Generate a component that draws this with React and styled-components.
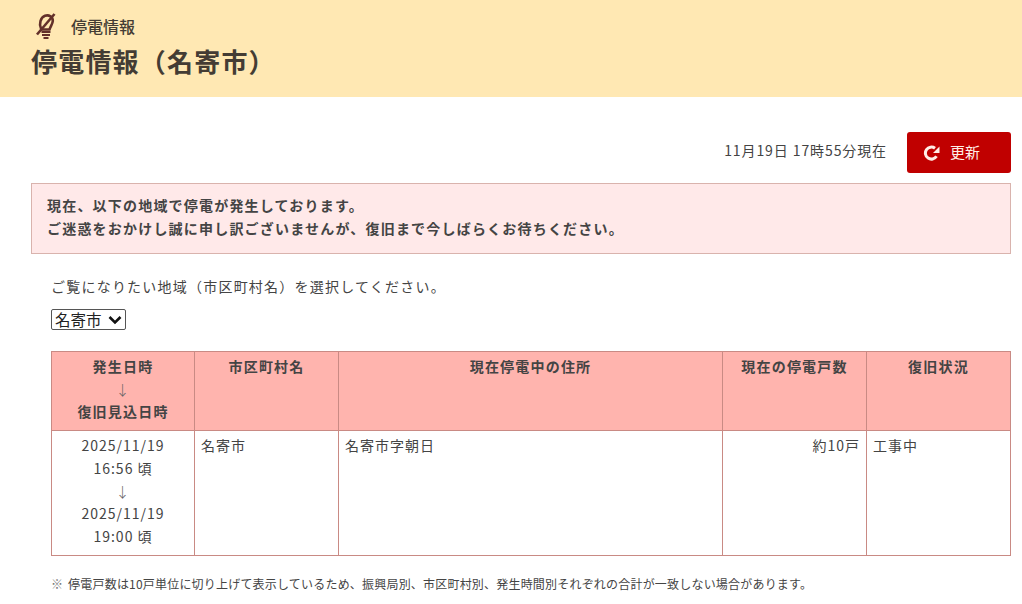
import React from "react";
import styled, { createGlobalStyle } from "styled-components";

const chevron =
  "data:image/svg+xml,%3Csvg xmlns='http://www.w3.org/2000/svg' width='14' height='10' viewBox='0 0 14 10'%3E%3Cpath d='M1.5 2l5.5 5.5L12.500 2' fill='none' stroke='%23111' stroke-width='2.6'/%3E%3C/svg%3E";

const Global = createGlobalStyle`
  html, body { margin: 0; padding: 0; background: #fff; }
  body {
    color: #444;
    font-family: "Noto Sans CJK JP", "Noto Sans", sans-serif;
    font-size: 14px;
    letter-spacing: 1.2px;
  }
`;

const Header = styled.header`
  height: 97px;
  box-sizing: border-box;
  background: #ffe8b3;
  padding: 13px 0 0 31px;
`;
const Crumb = styled.div`
  display: flex;
  align-items: center;
  gap: 15px;
  height: 28px;
  padding-left: 5px;
  font-size: 16px;
  line-height: 28px;
  letter-spacing: 0;
  font-weight: 500;
  color: #443c34;
`;
const CrumbLabel = styled.span`
  position: relative;
  top: -1px;
`;
const Title = styled.h1`
  margin: 2px 0 0;
  font-size: 26px;
  line-height: 36px;
  font-weight: 700;
  letter-spacing: 1.2px;
  color: #443c34;
`;
const Main = styled.main`
  padding: 35px 11px 0 31px;
`;
const StatusRow = styled.div`
  display: flex;
  justify-content: flex-end;
  align-items: center;
  gap: 20px;
  height: 41px;
`;
const Stamp = styled.span`
  letter-spacing: 0.9px;
  line-height: 37px;
  align-self: flex-start;
  color: #444;
`;
const RefreshButton = styled.button`
  display: flex;
  align-items: center;
  gap: 10px;
  width: 104px;
  height: 41px;
  padding: 0 0 3px 16px;
  border: 0;
  border-radius: 3px;
  background: #c00000;
  color: #ffeee6;
  font: inherit;
  font-size: 15px;
  letter-spacing: 0;
`;
const RefreshGlyph = styled.svg`
  margin-top: 4px;
`;
const Notice = styled.div`
  margin-top: 10px;
  height: 71px;
  box-sizing: border-box;
  padding: 10px 15px 0;
  border: 1px solid #d9b3ad;
  background: #ffe9e9;
  font-weight: 700;
  line-height: 23px;
  letter-spacing: 1.2px;
  color: #444;
`;
const Section = styled.div`
  padding-left: 20px;
`;
const Lead = styled.p`
  margin: 20px 0 0;
  line-height: 24px;
  letter-spacing: 1.22px;
`;
const AreaSelect = styled.select`
  display: block;
  margin-top: 11px;
  width: 75px;
  height: 21px;
  padding: 0 0 0 3px;
  appearance: none;
  font-family: inherit;
  font-size: 15.500px;
  line-height: 19px;
  letter-spacing: 0;
  color: #222;
  background: #fff url("${chevron}") no-repeat right 3px center;
  border: 1px solid #555;
  border-radius: 2px;
`;
const Table = styled.table`
  margin-top: 21px;
  width: 959px;
  border-collapse: collapse;
  table-layout: fixed;
`;
const Th = styled.th`
  width: ${(p) => p.$w}px;
  height: 79px;
  box-sizing: border-box;
  padding: 3px 6px;
  vertical-align: top;
  background: #ffb4ae;
  border: 1px solid #c98a84;
  font-weight: 700;
  line-height: 22.5px;
  color: #444;
`;
const Td = styled.td`
  height: 125px;
  box-sizing: border-box;
  padding: 3px 6px;
  vertical-align: top;
  border: 1px solid #c98a84;
  line-height: 22.8px;
  letter-spacing: 1px;
  text-align: ${(p) => p.$align || "left"};
`;
const Arrow = styled.span`
  font-weight: 300;
  color: #666;
`;
const Note = styled.p`
  margin: 19px 0 0;
  font-size: 12px;
  line-height: 18px;
  letter-spacing: 0.2px;
`;
const NoteMark = styled.span`
  margin-right: 2px;
  color: #777;
`;

const BulbIcon = () => (
  <svg width="20" height="28" viewBox="0 0 20 28" fill="none" stroke="#63302a">
    <path d="M5 15.500C2.800 11 4.500 4.500 9 2.800c4-1.300 8 1 7.800 5.200-.2 3-2.300 5.500-3.300 8.500H6z" strokeWidth="2.600" />
    <path d="M5.500 19h9M6 22h8M7.500 25h5" strokeWidth="2.200" />
    <path d="M1 21.500L18.500 1" strokeWidth="2.600" />
  </svg>
);
const RefreshIcon = () => (
  <RefreshGlyph width="17" height="16" viewBox="0 0 17 16" fill="none">
    <path d="M13.500 11.300A6 6 0 1 1 12 3.300" stroke="#ffeee6" strokeWidth="3" />
    <path d="M16.500 1.500v6.500H10z" fill="#ffeee6" />
  </RefreshGlyph>
);

export default function App() {
  return (
    <>
      <Global />
      <Header>
        <Crumb>
          <BulbIcon />
          <CrumbLabel>停電情報</CrumbLabel>
        </Crumb>
        <Title>停電情報（名寄市）</Title>
      </Header>
      <Main>
        <StatusRow>
          <Stamp>11月19日 17時55分現在</Stamp>
          <RefreshButton>
            <RefreshIcon />
            更新
          </RefreshButton>
        </StatusRow>
        <Notice>
          現在、以下の地域で停電が発生しております。
          <br />
          ご迷惑をおかけし誠に申し訳ございませんが、復旧まで今しばらくお待ちください。
        </Notice>
        <Section>
          <Lead>ご覧になりたい地域（市区町村名）を選択してください。</Lead>
          <AreaSelect defaultValue="名寄市">
            <option>名寄市</option>
          </AreaSelect>
          <Table>
            <thead>
              <tr>
                <Th $w={143}>
                  発生日時
                  <br />
                  <Arrow>↓</Arrow>
                  <br />
                  復旧見込日時
                </Th>
                <Th $w={144}>市区町村名</Th>
                <Th $w={384}>現在停電中の住所</Th>
                <Th $w={144}>現在の停電戸数</Th>
                <Th $w={144}>復旧状況</Th>
              </tr>
            </thead>
            <tbody>
              <tr>
                <Td $align="center">
                  2025/11/19
                  <br />
                  16:56 頃
                  <br />
                  <Arrow>↓</Arrow>
                  <br />
                  2025/11/19
                  <br />
                  19:00 頃
                </Td>
                <Td>名寄市</Td>
                <Td>名寄市字朝日</Td>
                <Td $align="right">約10戸</Td>
                <Td>工事中</Td>
              </tr>
            </tbody>
          </Table>
          <Note>
            <NoteMark>※</NoteMark> 停電戸数は10戸単位に切り上げて表示しているため、振興局別、市区町村別、発生時間別それぞれの合計が一致しない場合があります。
          </Note>
        </Section>
      </Main>
    </>
  );
}
